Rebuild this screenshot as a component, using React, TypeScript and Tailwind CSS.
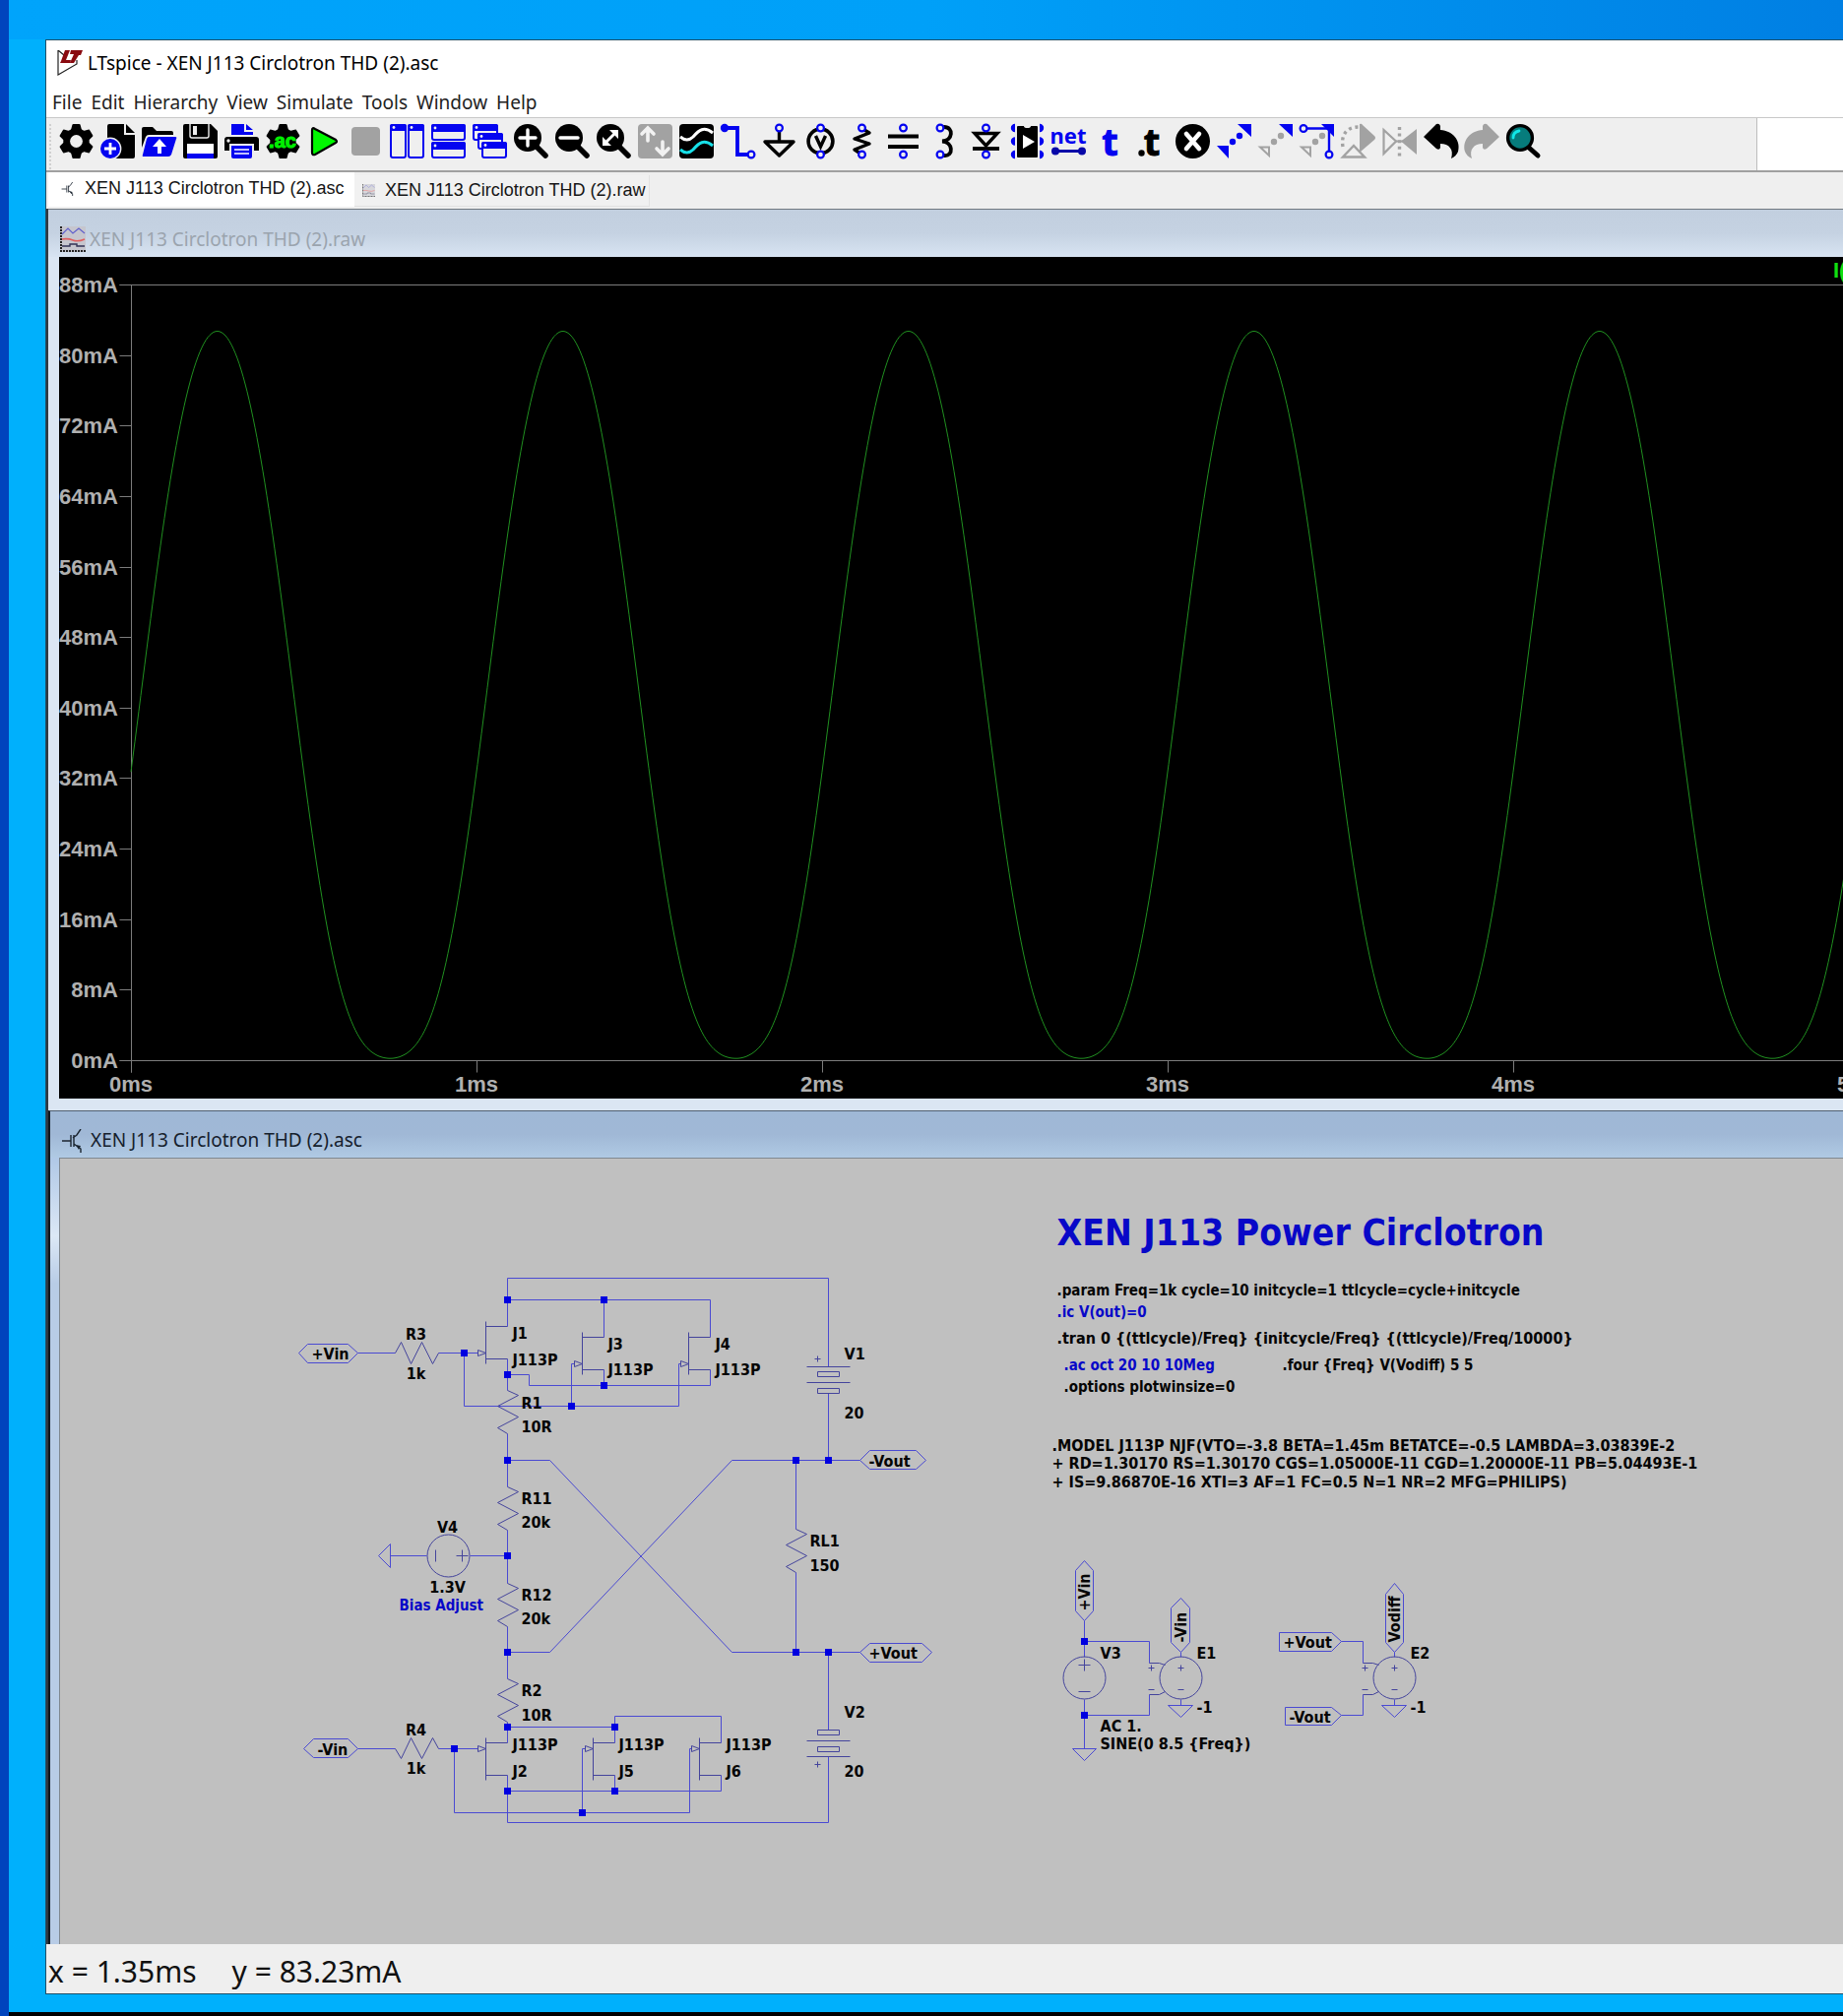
import type { ReactNode } from "react";

const BLUE = "#0404f0";
const GRAY = "#a2a2a2";
const PAPER = "#efefef";

/* ---------- toolbar icons (35 x 35 drawing area) ---------- */

function Ring({ x, y, color = BLUE }: { x: number; y: number; color?: string }) {
  return <circle cx={x} cy={y} r="3.4" fill={PAPER} stroke={color} strokeWidth="2.2" />;
}

function GearShape() {
  const tooth = "M12 6 L13.5 0.5 Q13.7 0 14.5 0 H20.5 Q21.3 0 21.5 0.5 L23 6 Z";
  return (
    <g>
      <circle cx="17.5" cy="17.5" r="13.2" />
      {[0, 60, 120, 180, 240, 300].map((a) => (
        <path key={a} d={tooth} transform={`rotate(${a} 17.5 17.5)`} />
      ))}
    </g>
  );
}

function Lens({ children }: { children: ReactNode }) {
  return (
    <g>
      <path d="M22 22 L32 32" stroke="#000" strokeWidth="5.5" strokeLinecap="round" />
      <circle cx="14" cy="14" r="14" />
      {children}
    </g>
  );
}

function MiniWindow({ x, y, w, h, bar = 5 }: { x: number; y: number; w: number; h: number; bar?: number }) {
  return (
    <g>
      <rect x={x + 1} y={y + 1} width={w - 2} height={h - 2} rx="2" fill={PAPER} stroke={BLUE} strokeWidth="2" />
      <rect x={x} y={y} width={w} height={bar + 2} rx="2" fill={BLUE} />
      <circle cx={x + 4} cy={y + bar / 2 + 1} r="1.4" fill={PAPER} />
    </g>
  );
}

const icons: { name: string; art: ReactNode }[] = [
  {
    name: "Settings",
    art: (
      <g>
        <GearShape />
        <circle cx="17.5" cy="17.5" r="6.4" fill={PAPER} />
      </g>
    ),
  },
  {
    name: "New schematic",
    art: (
      <g>
        <path d="M9 0 H24 V11 H35 V33 Q35 35 33 35 H7 V2 Q7 0 9 0 Z" />
        <path d="M26 0 L35 9 H26 Z" />
        <circle cx="10" cy="25" r="11.4" fill={PAPER} />
        <circle cx="10" cy="25" r="10" fill={BLUE} />
        <path d="M10 19 V31 M4 25 H16" stroke="#fff" strokeWidth="2.8" />
      </g>
    ),
  },
  {
    name: "Open",
    art: (
      <g>
        <path d="M0 5 Q0 3 2 3 H11 L15 7 H30 Q32 7 32 9 V11 H7 Q5 11 4 13 L0 24 Z" />
        <path d="M7 13 H34 Q36 13 35 15 L30 31 Q29 33 27 33 H2 Q0 33 1 31 L5 15 Q6 13 7 13 Z" fill={BLUE} />
        <path d="M18 15 L25 23 H20 V30 H16 V23 H11 Z" fill="#fff" />
      </g>
    ),
  },
  {
    name: "Save",
    art: (
      <g>
        <path d="M2 0 H28 L35 7 V33 Q35 35 33 35 H2 Q0 35 0 33 V2 Q0 0 2 0 Z" />
        <path d="M7 0 V12 Q7 14 9 14 H24 Q26 14 26 12 V0" fill="none" stroke={PAPER} strokeWidth="1.4" />
        <rect x="10" y="2" width="4" height="9" fill={PAPER} />
        <rect x="4" y="20" width="27" height="11" fill="#fff" />
        <rect x="4" y="30" width="27" height="5" fill={BLUE} />
      </g>
    ),
  },
  {
    name: "Print",
    art: (
      <g>
        <path d="M7 0 H20 V8 H29 V11 H7 Z M22 0 L29 6 H22 Z" fill={BLUE} />
        <path d="M3 13 H32 Q35 13 35 16 V27 H30 V20 H5 V27 H0 V16 Q0 13 3 13 Z" />
        <circle cx="4" cy="17" r="1.7" fill={PAPER} />
        <path d="M7 22 H28 V33 Q28 35 26 35 H9 Q7 35 7 33 Z" fill={BLUE} />
        <path d="M10 26 H25 M10 30 H25" stroke="#fff" strokeWidth="1.6" />
      </g>
    ),
  },
  {
    name: "Configure analysis",
    art: (
      <g>
        <GearShape />
        <text x="17" y="24" textAnchor="middle" fontSize="20" fontWeight="700" fontFamily="Liberation Sans, sans-serif" fill="#00f000" stroke="#00f000" strokeWidth="1">
          .ac
        </text>
      </g>
    ),
  },
  {
    name: "Run",
    art: <path d="M5 6 Q5 3 8 5 L29 16 Q31 18 29 19 L8 31 Q5 32 5 29 Z" fill="#00f800" stroke="#000" strokeWidth="2.2" />,
  },
  { name: "Stop", art: <rect x="3" y="3" width="29" height="29" rx="4" fill={GRAY} /> },
  {
    name: "Tile vertically",
    art: (
      <g>
        <MiniWindow x={0} y={0} w={17} h={35} />
        <MiniWindow x={18} y={0} w={17} h={35} />
      </g>
    ),
  },
  {
    name: "Tile horizontally",
    art: (
      <g>
        <MiniWindow x={0} y={0} w={35} h={17} bar={6} />
        <MiniWindow x={0} y={18} w={35} h={17} bar={6} />
      </g>
    ),
  },
  {
    name: "Cascade",
    art: (
      <g>
        <MiniWindow x={0} y={0} w={26} h={17} />
        <MiniWindow x={5} y={9} w={26} h={17} />
        <MiniWindow x={9} y={18} w={26} h={17} />
      </g>
    ),
  },
  { name: "Zoom in", art: <Lens><path d="M14 6 V22 M6 14 H22" stroke="#fff" strokeWidth="3.4" strokeLinecap="round" /></Lens> },
  { name: "Zoom out", art: <Lens><path d="M5 14 H23" stroke="#fff" strokeWidth="3.4" strokeLinecap="round" /></Lens> },
  {
    name: "Zoom to fit",
    art: (
      <Lens>
        <path d="M13 6 H22 V15 Z M6 13 V22 H15 Z" fill="#fff" />
        <path d="M10 18 L18 10" stroke="#fff" strokeWidth="3" />
      </Lens>
    ),
  },
  {
    name: "Autorange",
    art: (
      <g>
        <rect width="35" height="35" rx="4" fill={GRAY} />
        <path d="M10 17 V6 M4 10 L10 4 L16 10 M25 18 V29 M19 25 L25 31 L31 25" fill="none" stroke="#f2f2f2" strokeWidth="3.6" strokeLinecap="round" />
      </g>
    ),
  },
  {
    name: "Add trace",
    art: (
      <g>
        <rect width="35" height="35" rx="4" />
        <path d="M1 13 Q8 19 14 13 C20 6 25 2 34 9" fill="none" stroke="#fff" strokeWidth="3" />
        <path d="M1 26 Q8 32 14 26 C20 19 25 15 34 22" fill="none" stroke="#18e0e8" strokeWidth="3" />
      </g>
    ),
  },
  {
    name: "Wire",
    art: (
      <g>
        <path d="M4 4 H17 V31 H28" fill="none" stroke={BLUE} strokeWidth="3.8" />
        <circle cx="4" cy="4" r="4.2" fill={BLUE} />
        <Ring x={31} y={31} />
      </g>
    ),
  },
  {
    name: "Ground",
    art: (
      <g>
        <path d="M17.5 7 V18 M3 18 H32 L17.5 32 Z" fill="none" stroke="#000" strokeWidth="3.4" strokeLinejoin="round" />
        <Ring x={17.5} y={4} />
      </g>
    ),
  },
  {
    name: "Voltage source",
    art: (
      <g>
        <circle cx="17.5" cy="17.5" r="12.4" fill="none" stroke="#000" strokeWidth="3.6" />
        <path d="M12.5 12 L17.5 23 L22.5 12" fill="none" stroke="#000" strokeWidth="3.4" />
        <Ring x={17.5} y={4} />
        <Ring x={17.5} y={31} />
      </g>
    ),
  },
  {
    name: "Resistor",
    art: (
      <g>
        <path d="M20 6 L25 9 L10 15 L25 20 L10 26 L16 30" fill="none" stroke="#000" strokeWidth="3.4" strokeLinejoin="round" />
        <Ring x={17.5} y={4} />
        <Ring x={17.5} y={31} />
      </g>
    ),
  },
  {
    name: "Capacitor",
    art: (
      <g>
        <path d="M2 12.4 H33 M2 23 H33" stroke="#000" strokeWidth="4" />
        <Ring x={17.5} y={4} />
        <Ring x={17.5} y={31} />
      </g>
    ),
  },
  {
    name: "Inductor",
    art: (
      <g>
        <path d="M17 3 C27 3 26 17 15 17.5 C26 18 27 33 17 32" fill="none" stroke="#000" strokeWidth="3.8" strokeLinecap="round" />
        <Ring x={13} y={4} />
        <Ring x={13} y={31} />
      </g>
    ),
  },
  {
    name: "Diode",
    art: (
      <g>
        <path d="M6 9.5 H29 L17.5 22 Z" fill="none" stroke="#000" strokeWidth="3.4" />
        <path d="M4 25 H31" stroke="#000" strokeWidth="3.8" />
        <Ring x={17.5} y={4} />
        <Ring x={17.5} y={31} />
      </g>
    ),
  },
  {
    name: "Component",
    art: (
      <g>
        {[4, 17.5, 31].map((y) => (
          <path key={y} d={`M5 ${y - 3.5} a3.5 3.5 0 0 0 0 7 M30 ${y - 3.5} a3.5 3.5 0 0 1 0 7`} fill={BLUE} stroke={BLUE} strokeWidth="1.4" />
        ))}
        <path d="M8 2 H14 Q14 4 17.5 4 Q21 4 21 2 H27 Q28 2 28 3 V33 Q28 34 27 34 H8 Q7 34 7 33 V3 Q7 2 8 2 Z" />
        <path d="M13 11 L25 18 L13 25 Z" fill="#fff" />
      </g>
    ),
  },
  {
    name: "Net name",
    art: (
      <g>
        <text x="17" y="20" textAnchor="middle" fontSize="22" fontWeight="700" fontFamily="Noto Sans, sans-serif" fill={BLUE}>
          net
        </text>
        <path d="M4 27.5 H31" stroke="#0808a8" strokeWidth="3" />
        <circle cx="4" cy="27.5" r="4" fill="#0808a8" />
        <circle cx="31" cy="27.5" r="4" fill="#0808a8" />
      </g>
    ),
  },
  {
    name: "Text",
    art: (
      <text x="17.5" y="32" textAnchor="middle" fontSize="38" fontWeight="700" fontFamily="Open Sans, sans-serif" fill={BLUE} stroke={BLUE}>
        t
      </text>
    ),
  },
  {
    name: "SPICE directive",
    art: (
      <g>
        <circle cx="7.5" cy="29.5" r="3.2" />
        <text x="18" y="32" textAnchor="middle" fontSize="38" fontWeight="700" fontFamily="Open Sans, sans-serif" stroke="#000">
          t
        </text>
      </g>
    ),
  },
  {
    name: "Delete",
    art: (
      <g>
        <circle cx="17.5" cy="17.5" r="17.5" />
        <path d="M11 10 L24 25 M24 10 L11 25" stroke="#fff" strokeWidth="4.6" strokeLinecap="round" />
      </g>
    ),
  },
  {
    name: "Move",
    art: (
      <g fill={BLUE}>
        <path d="M21 0 H35 V13 Z M0 22 H12 V35 Z" />
        <circle cx="16" cy="18" r="3.2" />
        <circle cx="23" cy="12" r="3.2" />
      </g>
    ),
  },
  {
    name: "Stretch",
    art: (
      <g>
        <path d="M21 0 H35 V13 Z" fill={BLUE} />
        <path d="M2 23.5 H11 V32 Z" fill="none" stroke={GRAY} strokeWidth="2" />
        <circle cx="16" cy="18" r="3.2" fill={GRAY} />
        <circle cx="23" cy="12" r="3.2" fill={GRAY} />
      </g>
    ),
  },
  {
    name: "Drag",
    art: (
      <g>
        <path d="M2 23.5 H11 V32 Z" fill="none" stroke={GRAY} strokeWidth="2" />
        <circle cx="16" cy="18" r="3.2" fill={GRAY} />
        <circle cx="23" cy="12" r="3.2" fill={GRAY} />
        <path d="M22 0 H35 V13 Z" fill={BLUE} />
        <path d="M6 4.5 H30 V30" fill="none" stroke={BLUE} strokeWidth="2.4" />
        <Ring x={4} y={4.5} />
        <Ring x={30} y={31} />
      </g>
    ),
  },
  {
    name: "Rotate",
    art: (
      <g>
        <path d="M19 0 Q21 -1 22 1 L34 12 Q36 14 34 16 L20 28 H19 Z" fill={GRAY} />
        <path d="M2 23 C0 12 5 3 18 3" fill="none" stroke={GRAY} strokeWidth="3.4" strokeDasharray="3 3.6" />
        <path d="M2 33.5 L13 22 L24 33.5 Z" fill={PAPER} stroke={GRAY} strokeWidth="2.4" />
      </g>
    ),
  },
  {
    name: "Mirror",
    art: (
      <g>
        <path d="M1.5 6 V30 L14 17.5 Z" fill="none" stroke={GRAY} strokeWidth="2.2" />
        <path d="M35 5 V31 L19 17.5 Z" fill={GRAY} />
        <path d="M17.5 3 V33" stroke={GRAY} strokeWidth="3.4" strokeDasharray="3 3.6" />
        <path d="M13 17.5 H22" stroke={GRAY} strokeWidth="2" />
      </g>
    ),
  },
  {
    name: "Undo",
    art: <path d="M0 13 L13 0 Q16 -1 17 2 V6 C30 7 38 17 35 28 Q33 33 28 35 C31 26 26 20 17 20 V24 Q16 27 13 25 Z" />,
  },
  {
    name: "Redo",
    art: <path d="M35 13 L22 0 Q19 -1 18 2 V6 C5 7 -3 17 0 28 Q2 33 7 35 C4 26 9 20 18 20 V24 Q19 27 22 25 Z" fill={GRAY} />,
  },
  {
    name: "Search",
    art: (
      <g>
        <path d="M23 24 L32 32" stroke="#000" strokeWidth="5" strokeLinecap="round" />
        <circle cx="14" cy="14" r="12.4" fill="#067c7c" stroke="#000" strokeWidth="3.4" />
        <path d="M7 14 Q7 8 13 7" fill="none" stroke="#10e8e8" strokeWidth="2.8" strokeLinecap="round" />
      </g>
    ),
  },
];

function LtLogo() {
  return (
    <svg width="26" height="26" viewBox="0 0 26 26" aria-hidden="true">
      <path d="M1 0 V25 L20 14 V10 M1 0 L7 5" fill="none" stroke="#222" strokeWidth="1.2" />
      <path d="M8 0 H13 L9 10 H14 L13 13 H3 L4 11 Z M14 0 H26 L24 5 H22 L17 13 H13 L17 4 H13 Z" fill="#8a0a10" />
    </svg>
  );
}

function PlotGlyph({ size }: { size: number }) {
  return (
    <svg width={size} height={size} viewBox="0 0 26 26" aria-hidden="true">
      <rect width="26" height="26" fill="#c6c6ce" />
      <path d="M1 0 V25 H26" fill="none" stroke="#222" strokeWidth="2" strokeDasharray="2 1" />
      <path d="M2 8 L8 2 L13 7 L19 2 L25 7" fill="none" stroke="#6060cc" strokeWidth="1.2" />
      <path d="M2 13 Q8 12 13 14 T25 13" fill="none" stroke="#e06060" strokeWidth="1.6" />
      <path d="M2 20 H10 V18 H17 V20 H25" fill="none" stroke="#335" strokeWidth="1.4" />
    </svg>
  );
}

function TransistorGlyph({ size }: { size: number }) {
  return (
    <svg width={size} height={size} viewBox="0 0 24 24" aria-hidden="true">
      <path d="M1 12 H10 M10 6 V18 M13 6 V18 M12 9 L16 6 L20 0 M13 15 L20 20 V24" fill="none" stroke="#1b2530" strokeWidth="1.4" />
      <path d="M15 16 L20 17 L18 21 Z" fill="#1b2530" />
    </svg>
  );
}

/* ---------- waveform ---------- */

const X0 = 73;
const MS = 351;
const TOP = 28;
const BOTTOM = 816;

function tracePath() {
  const points: string[] = [];
  for (let x = 0; x <= 2600; x += 2) {
    const s = Math.sin((2 * Math.PI * x) / MS);
    const mA = 32.7 + 47.3 * s + 8.75 * s * s - 6.05 * s * s * s;
    points.push(`${X0 + x} ${(BOTTOM - (mA * (BOTTOM - TOP)) / 88).toFixed(1)}`);
  }
  return "M" + points.join(" L");
}

function Waveform() {
  const levels = Array.from({ length: 12 }, (_, i) => i * 8);
  const times = [0, 1, 2, 3, 4, 5];
  return (
    <svg className="block h-[855px] w-full bg-black" role="img" aria-label="Current waveform" fontFamily="Liberation Sans, sans-serif" fontWeight="700" fontSize="22">
      <g stroke="#7c7c7c" strokeWidth="1" fill="none" transform="translate(0.5 0.5)">
        <path d={`M${X0 - 12} ${TOP} H4000 M${X0 - 12} ${BOTTOM} H4000 M${X0} ${TOP} V${BOTTOM + 12}`} />
        {levels.map((v) => {
          const y = Math.round(BOTTOM - (v * (BOTTOM - TOP)) / 88);
          return <path key={v} d={`M${X0 - 12} ${y} H${X0}`} />;
        })}
        {times.map((t) => (
          <path key={t} d={`M${X0 + t * MS} ${BOTTOM} V${BOTTOM + 12}`} />
        ))}
      </g>
      <g fill="#b0b0b0">
        {levels.map((v) => (
          <text key={v} x={X0 - 13} y={Math.round(BOTTOM - (v * (BOTTOM - TOP)) / 88) + 8} textAnchor="end">
            {v}mA
          </text>
        ))}
        {times.map((t) => (
          <text key={t} x={X0 + t * MS} y={BOTTOM + 32} textAnchor="middle">
            {t}ms
          </text>
        ))}
      </g>
      <path d={tracePath()} fill="none" stroke="#209020" strokeWidth="1" />
      <text x="1802" y="21" fill="#10e010">
        I(
      </text>
    </svg>
  );
}

/* ---------- schematic ---------- */

const WIRE = "#4a4ad2";
const BODY = "#44449c";

function Node({ x, y }: { x: number; y: number }) {
  return <rect x={x - 3.5} y={y - 3.5} width="7" height="7" fill="#0000e0" />;
}

function ResistorV({ x, y }: { x: number; y: number }) {
  return <path d={`M${x} ${y} l11 5 l-21 11 l21 11 l-21 11 l10 6`} stroke={BODY} />;
}

function Jfet({ x, y, gate }: { x: number; y: number; gate: number }) {
  return (
    <g stroke={BODY}>
      <path d={`M${x - 22} ${y - 5} V${y + 38} M${x - 22} ${y} H${x} M${x - 22} ${y + 33} H${x}`} />
      <path d={`M${x - 30} ${y + gate - 3} v6 l8 -3 z`} />
    </g>
  );
}

function Plus({ x, y, r = 3 }: { x: number; y: number; r?: number }) {
  return <path d={`M${x - r} ${y} h${2 * r} M${x} ${y - r} v${2 * r}`} stroke={BODY} />;
}

type Label = [number, number, string];

const nodes: [number, number][] = [
  [515, 1320], [613, 1320], [471, 1374], [515, 1396], [613, 1407], [580, 1428],
  [515, 1483], [808, 1483], [841, 1483], [515, 1580], [515, 1678], [808, 1678], [841, 1678],
  [515, 1754], [624, 1754], [461, 1776], [515, 1819], [624, 1819], [591, 1841],
  [1101, 1667], [1101, 1742],
];

const labels: Label[] = [
  [520, 1359, "J1"], [520, 1386, "J113P"], [617, 1370, "J3"], [617, 1396, "J113P"], [726, 1370, "J4"], [726, 1396, "J113P"],
  [529, 1430, "R1"], [529, 1454, "10R"], [857, 1380, "V1"], [857, 1440, "20"],
  [529, 1527, "R11"], [529, 1551, "20k"], [529, 1625, "R12"], [529, 1649, "20k"], [529, 1722, "R2"], [529, 1747, "10R"],
  [822, 1570, "RL1"], [822, 1595, "150"], [857, 1744, "V2"], [857, 1804, "20"],
  [520, 1777, "J113P"], [520, 1804, "J2"], [628, 1777, "J113P"], [628, 1804, "J5"], [737, 1777, "J113P"], [737, 1804, "J6"],
  [316, 1380, "+Vin"], [322, 1782, "-Vin"], [882, 1489, "-Vout"], [882, 1684, "+Vout"],
  [1117, 1684, "V3"], [1215, 1684, "E1"], [1432, 1684, "E2"], [1215, 1739, "-1"], [1432, 1739, "-1"],
  [1117, 1758, "AC 1."], [1117, 1776, "SINE(0 8.5 {Freq})"],
  [1303, 1673, "+Vout"], [1309, 1749, "-Vout"],
  [1073, 1364, ".tran 0 {(ttlcycle)/Freq} {initcycle/Freq} {(ttlcycle)/Freq/10000}"],
  [1068, 1473, ".MODEL J113P NJF(VTO=-3.8 BETA=1.45m BETATCE=-0.5 LAMBDA=3.03839E-2"],
  [1068, 1491, "+ RD=1.30170 RS=1.30170 CGS=1.05000E-11 CGD=1.20000E-11 PB=5.04493E-1"],
  [1068, 1510, "+ IS=9.86870E-16 XTI=3 AF=1 FC=0.5 N=1 NR=2 MFG=PHILIPS)"],
];

const directives: Label[] = [
  [1073, 1315, ".param Freq=1k cycle=10 initcycle=1 ttlcycle=cycle+initcycle"],
  [1302, 1391, ".four {Freq} V(Vodiff) 5 5"],
  [1080, 1413, ".options plotwinsize=0"],
];

const centered: Label[] = [
  [422, 1360, "R3"], [422, 1400, "1k"], [422, 1762, "R4"], [422, 1801, "1k"], [454, 1556, "V4"], [454, 1617, "1.3V"],
];

const comments: Label[] = [
  [405, 1635, "Bias Adjust"], [1073, 1337, ".ic V(out)=0"], [1080, 1391, ".ac oct 20 10 10Meg"],
];

const vertical: Label[] = [
  [1106, 1636, "+Vin"], [1204, 1668, "-Vin"], [1421, 1668, "Vodiff"],
];

function Texts({ items, ...rest }: { items: Label[]; fontSize?: number; textAnchor?: "middle"; fill?: string }) {
  return (
    <g {...rest}>
      {items.map(([x, y, t]) => (
        <text key={`${x}-${y}`} x={x} y={y}>{t}</text>
      ))}
    </g>
  );
}

function Schematic() {
  return (
    <svg
      className="block h-full w-full"
      role="img"
      aria-label="Circlotron schematic"
      fontFamily="DejaVu Sans Condensed, Tahoma, sans-serif"
      fontWeight="700"
      fontSize="16"
    >
      <g transform="translate(-60.5 -1176.5)">
        <g fill="none" stroke={WIRE} strokeWidth="1">
          {/* upper bank */}
          <path d="M515 1347 V1298 H841 V1388 M515 1320 H721 V1358 M613 1320 V1358" />
          <path d="M363 1374 H401 M445 1374 H485 M471 1374 V1428 H689 V1385 H691 M580 1428 V1385 H583" />
          <path d="M515 1380 V1412 M515 1396 H537 V1407 H721 V1391 M613 1407 V1391 M515 1456 V1510" />
          {/* cross coupling */}
          <path d="M515 1483 H558 L743 1678 H873 M515 1678 H558 L743 1483 H873" />
          <path d="M515 1554 V1608 M515 1652 V1705 M808 1483 V1553 M808 1597 V1678 M841 1415 V1483 M841 1678 V1757" />
          <path d="M477 1580 H515 M433 1580 H396 M396 1568 V1592 L384 1580 Z" />
          {/* lower bank */}
          <path d="M515 1749 V1770 M515 1754 H624 M624 1770 V1743 H732 V1770 M515 1803 V1851 H841 V1784" />
          <path d="M515 1819 H732 V1803 M624 1803 V1819 M461 1776 V1841 H700 V1776 H702 M591 1841 V1776 H594" />
          <path d="M363 1776 H401 M445 1776 H485" />
          {/* flags */}
          <path d="M303 1374 L312 1365 H353 L363 1374 L353 1384 H312 Z" />
          <path d="M308 1776 L318 1766 H353 L363 1776 L353 1785 H318 Z" />
          <path d="M873 1483 L883 1473 H930 L940 1483 L930 1492 H883 Z" />
          <path d="M873 1678 L883 1669 H936 L946 1678 L936 1688 H883 Z" />
          <path d="M1101 1585 L1110 1595 V1636 L1101 1646 L1092 1636 V1595 Z" />
          <path d="M1199 1623 L1208 1633 V1668 L1199 1678 L1189 1668 V1633 Z" />
          <path d="M1416 1608 L1425 1619 V1668 L1416 1678 L1407 1668 V1619 Z" />
          <path d="M1299 1658 H1352 L1362 1667 L1352 1677 H1299 Z M1305 1734 H1352 L1362 1742 L1352 1752 H1305 Z" />
          {/* sources */}
          <path d="M1101 1646 V1683 M1101 1726 V1776 M1089 1776 H1113 L1101 1788 Z" />
          <path d="M1101 1667 H1167 V1689 M1101 1742 H1167 V1721 M1362 1667 H1384 V1689 M1362 1742 H1384 V1721" />
          <path d="M1199 1678 V1683 M1199 1726 V1732 M1186 1732 H1211 L1199 1744 Z" />
          <path d="M1416 1678 V1683 M1416 1726 V1732 M1403 1732 H1428 L1416 1744 Z" />
        </g>
        <g fill="none" stroke={BODY} strokeWidth="1">
          <path d="M401 1374 L407 1363 L417 1385 L428 1363 L439 1385 L445 1374 M401 1776 L407 1786 L417 1765 L428 1786 L439 1765 L445 1776" />
          <ResistorV x={515} y={1412} />
          <ResistorV x={515} y={1510} />
          <ResistorV x={515} y={1608} />
          <ResistorV x={515} y={1705} />
          <ResistorV x={808} y={1553} />
          <Jfet x={515} y={1347} gate={27} />
          <Jfet x={613} y={1358} gate={27} />
          <Jfet x={721} y={1358} gate={27} />
          <Jfet x={515} y={1770} gate={6} />
          <Jfet x={624} y={1770} gate={6} />
          <Jfet x={732} y={1770} gate={6} />
          <path d="M819 1388 H863 M819 1404 H863 M830 1393 H852 V1398 H830 Z M830 1410 H852 V1415 H830 Z" />
          <path d="M819 1768 H863 M819 1784 H863 M830 1757 H852 V1762 H830 Z M830 1774 H852 V1779 H830 Z" />
          <Plus x={830} y={1380} />
          <Plus x={830} y={1792} />
          <circle cx="455" cy="1580" r="21.5" />
          <path d="M442 1574 V1586" />
          <Plus x={469} y={1580} r={6} />
          <circle cx="1101" cy="1704" r="21.5" />
          <Plus x={1101} y={1691} r={6} />
          <path d="M1095 1718 H1107" />
          {[1199, 1416].map((x) => (
            <g key={x}>
              <circle cx={x} cy="1704" r="21.5" />
              <Plus x={x} y={1694} />
              <Plus x={x - 30} y={1694} />
              <path d={`M${x - 3} 1716 h6 M${x - 33} 1716 h6`} />
              <path d={`M${x - 32} 1689 h10 l6 2 M${x - 32} 1721 h10 l6 -3`} />
            </g>
          ))}
        </g>
        {nodes.map(([x, y]) => (
          <Node key={`${x}-${y}`} x={x} y={y} />
        ))}
        <g fill="#050505">
          <Texts items={labels} />
          <Texts items={directives} fontSize={15} />
          <Texts items={centered} textAnchor="middle" />
          {vertical.map(([x, y, t]) => (
            <text key={x} transform={`translate(${x} ${y}) rotate(-90)`}>{t}</text>
          ))}
        </g>
        <g fill="#0808c8">
          <Texts items={comments} fontSize={15} />
          <text x="1073" y="1264" fontSize="37">XEN J113 Power Circlotron</text>
        </g>
      </g>
    </svg>
  );
}

/* ---------- window ---------- */

export default function App() {
  const menus = ["File", "Edit", "Hierarchy", "View", "Simulate", "Tools", "Window", "Help"];
  return (
    <div className="flex min-h-screen overflow-hidden bg-[#0044bd] pl-[9px] font-['Noto_Sans',sans-serif]">
      <div className="flex min-w-0 flex-1 flex-col border-b-4 border-black bg-[linear-gradient(to_bottom,transparent_40px,#00b0fc_40px),linear-gradient(to_right,#00a4fb,#00a0f8_50%,#007fe3)] pt-10 pb-[18px] pl-[37px]">
        <div className="flex min-w-0 flex-1 flex-col border border-r-0 border-[#205068] bg-white">
          <header className="flex h-[46px] shrink-0 items-center gap-[5px] pl-[11px] text-black">
            <LtLogo />
            <h1 className="text-[19px] whitespace-nowrap">LTspice - XEN J113 Circlotron THD (2).asc</h1>
          </header>
          <nav className="flex h-8 shrink-0 items-center gap-[9px] pt-[2px] pl-[6px] text-[19px] text-[#222]">
            {menus.map((m) => (
              <button key={m} type="button">{m}</button>
            ))}
          </nav>
          <div className="flex h-[56px] shrink-0 border-t border-b-2 border-t-[#c8c8c8] border-b-[#a0a0a0]">
            <div className="flex w-[1738px] shrink-0 gap-[7px] border-r border-[#bdbdbd] bg-[#efefef] pt-[6px]">
              <div className="mr-[-2px] ml-[3px] h-[46px] w-[5px] border-l-2 border-dotted border-[#d0d0d0]" />
              {icons.map((i) => (
                <button key={i.name} type="button" aria-label={i.name} className="h-[35px] w-[35px] shrink-0">
                  <svg width="35" height="35" viewBox="0 0 35 35" className="overflow-visible">{i.art}</svg>
                </button>
              ))}
            </div>
          </div>
          <div className="flex h-[37px] shrink-0 items-start bg-[#efefef] pl-[2px] font-['Liberation_Sans',sans-serif] text-[18px] whitespace-nowrap text-[#151515]" role="tablist">
            <button type="button" role="tab" aria-selected="true" className="flex h-[35px] w-[311px] items-center gap-[10px] bg-white pb-[2px] pl-[13px]">
              <TransistorGlyph size={14} />
              <span>XEN J113 Circlotron THD (2).asc</span>
            </button>
            <button type="button" role="tab" aria-selected="false" className="mt-[3px] flex h-8 w-[300px] items-center gap-[10px] border border-t-0 border-l-0 border-[#e2e2e2] bg-[#f1f1f1] pl-2">
              <span className="opacity-60"><PlotGlyph size={13} /></span>
              <span>XEN J113 Circlotron THD (2).raw</span>
            </button>
          </div>
          <main className="flex min-h-0 flex-1 flex-col border-l-2 border-[#303840]">
            <section className="shrink-0 border-t border-[#707880] bg-[#dbe6f3] pb-3">
              <h2 className="flex h-12 items-center gap-1 bg-linear-to-b from-[#c2cfdf] via-[#c5d2e2] to-[#d8e4f2] pt-3 pl-3 text-[19px] text-[#9ba4ae]">
                <PlotGlyph size={26} />
                XEN J113 Circlotron THD (2).raw
              </h2>
              <div className="pl-[11px]"><Waveform /></div>
            </section>
            <section className="flex flex-1 flex-col border-t border-l-2 border-t-[#506070] border-l-[#101820] bg-[#b8cce6]">
              <h2 className="flex h-[47px] shrink-0 items-center gap-[6px] bg-linear-to-b from-[#9fb8d6] via-[#a0b8d6] to-[#b0cae4] pt-3 pl-[11px] text-[19px] text-[#15202c]">
                <TransistorGlyph size={24} />
                XEN J113 Circlotron THD (2).asc
              </h2>
              <div className="flex flex-1 flex-col bg-linear-to-b from-[#b0c8e6] from-0% via-[#dce8f6] via-10% to-[#b8cce6] to-16% pl-[9px]">
                <div className="min-h-[720px] flex-1 border-t border-l border-[#808890] bg-[#c0c0c0]"><Schematic /></div>
              </div>
            </section>
          </main>
          <footer className="flex h-[50px] shrink-0 items-center gap-9 bg-[#efefef] pt-1 pl-[2px] text-[30px] whitespace-nowrap text-[#111]">
            <span>x = 1.35ms</span>
            <span>y = 83.23mA</span>
          </footer>
        </div>
      </div>
    </div>
  );
}
